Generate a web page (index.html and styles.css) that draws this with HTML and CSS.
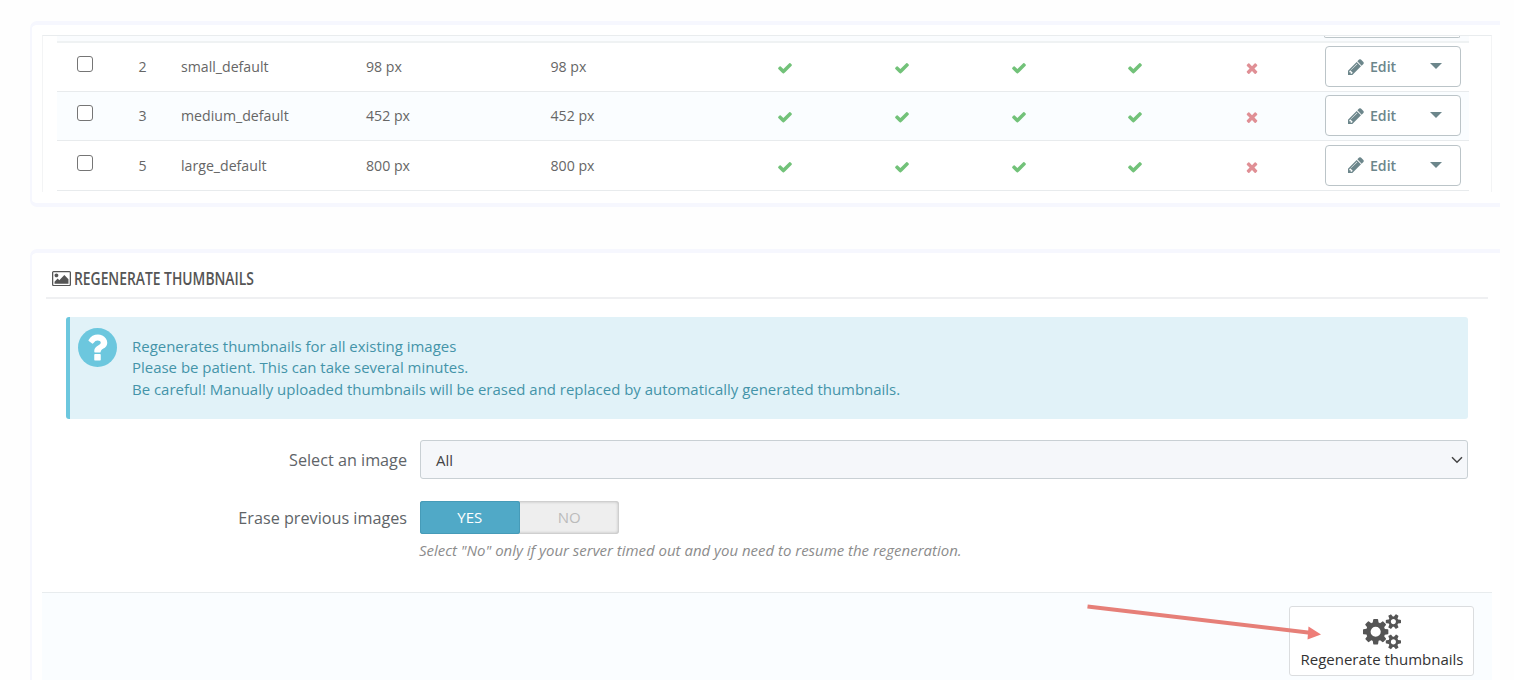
FILE: index.html
```html
<!DOCTYPE html>
<html lang="en">
<head>
<meta charset="utf-8">
<title>Image settings</title>
<link rel="stylesheet" href="styles.css">
</head>
<body>
<svg class="sprite" aria-hidden="true">
  <symbol id="check" viewBox="0 0 1792 1792"><path d="M1671 566q0 40-28 68l-724 724-136 136q-28 28-68 28t-68-28l-136-136-362-362q-28-28-28-68t28-68l136-136q28-28 68-28t68 28l294 295 656-657q28-28 68-28t68 28l136 136q28 28 28 68z"/></symbol>
  <symbol id="times" viewBox="0 0 1792 1792"><path d="M1490 1322q0 40-28 68l-136 136q-28 28-68 28t-68-28l-294-294-294 294q-28 28-68 28t-68-28l-136-136q-28-28-28-68t28-68l294-294-294-294q-28-28-28-68t28-68l136-136q28-28 68-28t68 28l294 294 294-294q28-28 68-28t68 28l136 136q28 28 28 68t-28 68l-294 294 294 294q28 28 28 68z"/></symbol>
  <symbol id="pencil" viewBox="128 128 1536 1536"><path d="M491 1536l91-91-235-235-91 91v107h128v128h107zm523-928q0-22-22-22-10 0-17 7l-542 542q-7 7-7 17 0 22 22 22 10 0 17-7l542-542q7-7 7-17zm-54-192l416 416-832 832h-416v-416zm683 96q0 53-37 90l-166 166-416-416 166-165q36-38 90-38 53 0 91 38l235 234q37 39 37 91z"/></symbol>
</svg>

<main class="page">
  <section class="panel panel-types">
    <div class="table-box">
      <div class="row row-cut"><div class="btn-cut"></div></div>
      <div class="row">
        <span class="check-box"></span><span>2</span><span>small_default</span><span>98 px</span><span>98 px</span>
        <svg class="ok"><use href="#check"/></svg><svg class="ok"><use href="#check"/></svg><svg class="ok"><use href="#check"/></svg><svg class="ok"><use href="#check"/></svg><svg class="no"><use href="#times"/></svg>
        <div class="btn-edit"><svg class="pencil"><use href="#pencil"/></svg><b>Edit</b><i class="caret"></i></div>
      </div>
      <div class="row row-odd">
        <span class="check-box"></span><span>3</span><span>medium_default</span><span>452 px</span><span>452 px</span>
        <svg class="ok"><use href="#check"/></svg><svg class="ok"><use href="#check"/></svg><svg class="ok"><use href="#check"/></svg><svg class="ok"><use href="#check"/></svg><svg class="no"><use href="#times"/></svg>
        <div class="btn-edit"><svg class="pencil"><use href="#pencil"/></svg><b>Edit</b><i class="caret"></i></div>
      </div>
      <div class="row row-last">
        <span class="check-box"></span><span>5</span><span>large_default</span><span>800 px</span><span>800 px</span>
        <svg class="ok"><use href="#check"/></svg><svg class="ok"><use href="#check"/></svg><svg class="ok"><use href="#check"/></svg><svg class="ok"><use href="#check"/></svg><svg class="no"><use href="#times"/></svg>
        <div class="btn-edit"><svg class="pencil"><use href="#pencil"/></svg><b>Edit</b><i class="caret"></i></div>
      </div>
    </div>
  </section>

  <section class="panel panel-regen">
    <h3 class="heading">
      <svg class="picture" viewBox="-64 128 1920 1536"><path d="M576 576q0 80-56 136t-136 56-136-56-56-136 56-136 136-56 136 56 56 136zm1024 384v448h-1408v-192l320-320 160 160 512-512zm96-704h-1600q-13 0-22.5 9.5t-9.5 22.5v1216q0 13 9.5 22.5t22.5 9.5h1600q13 0 22.5-9.5t9.5-22.5v-1216q0-13-9.5-22.5t-22.5-9.5zm160 32v1216q0 66-47 113t-113 47h-1600q-66 0-113-47t-47-113v-1216q0-66 47-113t113-47h1600q66 0 113 47t47 113z"/></svg>
      <span class="heading-text">REGENERATE THUMBNAILS</span>
    </h3>
    <div class="alert">
      <svg class="question" viewBox="128 128 1536 1536"><circle cx="896" cy="896" r="768"/><path d="M1024 1376v-192q0-14-9-23t-23-9h-192q-14 0-23 9t-9 23v192q0 14 9 23t23 9h192q14 0 23-9t9-23zm256-672q0-88-55.500-163t-138.500-116-170-41q-243 0-371 213-15 24 8 42l132 100q7 6 19 6 16 0 25-12 53-68 86-92 34-24 86-24 48 0 85.500 26t37.500 59q0 38-20 61t-68 45q-63 28-115.500 86.500t-52.500 125.500v36q0 14 9 23t23 9h192q14 0 23-9t9-23q0-19 21.500-49.500t54.500-49.500q32-18 49-28.500t46-35 44.500-48 28-60.500 12.500-81z" class="question-mark"/></svg>
      <div class="alert-text">
        <div>Regenerates thumbnails for all existing images</div>
        <div>Please be patient. This can take several minutes.</div>
        <div>Be careful! Manually uploaded thumbnails will be erased and replaced by automatically generated thumbnails.</div>
      </div>
    </div>
    <div class="form-row">
      <label class="label">Select an image</label>
      <div class="select"><span>All</span><svg class="chevron" viewBox="0 0 12 8"><path d="M1 1.200l5 5 5-5"/></svg></div>
    </div>
    <div class="form-row form-row-switch">
      <label class="label">Erase previous images</label>
      <div class="switch"><span class="yes">YES</span><span class="off">NO</span></div>
    </div>
    <p class="help">Select "No" only if your server timed out and you need to resume the regeneration.</p>
    <footer class="footer">
      <div class="btn-regen">
        <svg class="cogs" viewBox="-64 0 1920 1792"><path d="M832 896q0-106-75-181t-181-75-181 75-75 181 75 181 181 75 181-75 75-181zm768 512q0-52-38-90t-90-38-90 38-38 90q0 53 37.500 90.500t90.500 37.500 90.500-37.500 37.500-90.500zm0-1024q0-52-38-90t-90-38-90 38-38 90q0 53 37.500 90.500t90.500 37.500 90.500-37.500 37.500-90.500zm-384 421v185q0 10-7 19.500t-16 10.500l-155 24q-11 35-32 76 34 48 90 115 7 11 7 20 0 12-7 19-23 30-82.500 89.500t-78.500 59.500q-11 0-21-7l-115-90q-37 19-77 31-11 108-23 155-7 24-30 24h-186q-11 0-20-7.500t-10-17.500l-23-153q-34-10-75-31l-118 89q-7 7-20 7-11 0-21-8-144-133-144-160 0-9 7-19 10-14 41-53t47-61q-23-44-35-82l-152-24q-10-1-17-9.500t-7-19.500v-185q0-10 7-19.500t16-10.500l155-24q11-35 32-76-34-48-90-115-7-11-7-20 0-12 7-20 22-30 82-89t79-59q11 0 21 7l115 90q34-18 77-32 11-108 23-154 7-24 30-24h186q11 0 20 7.500t10 17.500l23 153q34 10 75 31l118-89q8-7 20-7 11 0 21 8 144 133 144 160 0 8-7 19-12 16-42 54t-45 60q23 48 34 82l152 23q10 2 17 10.500t7 19.500zm640 533v140q0 16-149 31-12 27-30 52 51 113 51 138 0 4-4 7-122 71-124 71-8 0-46-47t-52-68q-20 2-30 2t-30-2q-14 21-52 68t-46 47q-2 0-124-71-4-3-4-7 0-25 51-138-18-25-30-52-149-15-149-31v-140q0-16 149-31 13-29 30-52-51-113-51-138 0-4 4-7 4-2 35-20t59-34 30-16q8 0 46 46.500t52 67.500q20-2 30-2t30 2q51-71 92-112l6-2q4 0 124 70 4 3 4 7 0 25-51 138 17 23 30 52 149 15 149 31zm0-1024v140q0 16-149 31-12 27-30 52 51 113 51 138 0 4-4 7-122 71-124 71-8 0-46-47t-52-68q-20 2-30 2t-30-2q-14 21-52 68t-46 47q-2 0-124-71-4-3-4-7 0-25 51-138-18-25-30-52-149-15-149-31v-140q0-16 149-31 13-29 30-52-51-113-51-138 0-4 4-7 4-2 35-20t59-34 30-16q8 0 46 46.500t52 67.500q20-2 30-2t30 2q51-71 92-112l6-2q4 0 124 70 4 3 4 7 0 25-51 138 17 23 30 52 149 15 149 31z"/></svg>
        <span>Regenerate thumbnails</span>
      </div>
      <svg class="arrow" viewBox="0 0 240 40"><path d="M3.500 6.500L226 32.800" class="arrow-line"/><path d="M224.500 26.500L237 34.500 223.500 39.500z"/></svg>
    </footer>
  </section>
</main>
</body>
</html>
```

FILE: styles.css
```css
* { box-sizing: border-box; }
body { margin: 0; background: #fefefe; font-family: "Open Sans", "Noto Sans", sans-serif; color: #666; }
svg { display: block; fill: currentColor; }
.sprite { position: absolute; width: 0; height: 0; }
.page { width: 1514px; height: 680px; padding: 21px 14px 0 30px; overflow: hidden; }

.panel { border: solid #f6f7fe; border-width: 4px 0 4px 2px; border-radius: 7px 0 0 7px; background: #fff; }
.panel-types { height: 186px; padding: 10px 8px 0 10px; }
.panel-regen { height: 480px; margin-top: 42px; padding: 0 8px 0 10px; }

.table-box { height: 157px; padding: 0 22px 0 14px; border: 1px solid #f3f4f5; border-top-color: #e9ecee; border-bottom: 0; overflow: hidden; }
.row {
  display: grid;
  grid-template-columns: 81.5px 42.5px 185px 184.5px 176.5px repeat(5, 116.7px) 1fr;
  align-items: center;
  height: 49px;
  padding-bottom: 1px;
  border-bottom: 1px solid #e8ebed;
  font-size: 14.15px;
}
.row-odd { background: #fafdff; }
.row-last { height: 50px; }
.row-cut { display: flex; justify-content: flex-end; align-items: flex-start; height: 7px; border-bottom: 2px solid #eff2f3; background: #fafcfe; padding: 0 9px 0 0; }
.btn-cut { width: 136px; height: 2px; border: 1px solid #bdc6c9; border-top: 0; border-radius: 0 0 4px 4px; background: #fff; }
.check-box { width: 16px; height: 16px; margin: -5px 0 0 20px; border: 1px solid #757575; border-radius: 3px; background: #fff; }
.ok, .no { width: 16px; height: 16px; justify-self: center; margin-top: 3px; }
.ok { color: #72c279; }
.no { color: #e08f95; }
.btn-edit { display: flex; align-items: center; width: 136px; height: 41px; margin-left: 14.5px; padding-left: 22px; border: 1px solid #bbc4c8; border-radius: 4px; background: #fff; color: #6c868b; font-size: 14.15px; }
.btn-edit b { margin-left: 6px; font-weight: 600; }
.pencil { width: 16px; height: 16px; }
.caret { margin: -1px 0 0 33.5px; border: solid transparent; border-width: 6px 6px 0; border-top-color: #6c868b; }

.heading { display: flex; align-items: center; height: 46px; margin: 0 4px; padding: 7px 0 0 6px; border-bottom: 2px solid #eff0f2; color: #555; font-weight: 400; }
.picture { width: 19px; height: 15.2px; }
.heading-text { width: 181px; margin: -1px 0 0 3px; font-family: "Open Sans", sans-serif; font-size: 17.8px; font-weight: 600; white-space: nowrap; transform: scaleX(.779); transform-origin: left; }

.alert { display: flex; height: 102px; margin: 18px 24px 0; padding: 11px 0 0 8px; border-left: 4px solid #6cc7de; border-radius: 3px; background: #e1f2f8; color: #4494a9; }
.question { width: 39px; height: 39px; color: #6cc7de; }
.question-mark { fill: #fff; }
.alert-text { padding: 8px 0 0 15px; font-size: 14.96px; line-height: 21.3px; }

.form-row { display: flex; align-items: center; height: 39px; margin: 21px 24px 0; }
.form-row-switch { height: 33px; margin-top: 22px; }
.label { width: 341px; margin-right: 13px; text-align: right; font-size: 16.2px; color: #606468; }
.select { display: flex; flex: 1; align-items: center; justify-content: space-between; height: 39px; padding: 0 4px 0 15px; border: 1px solid #c9d0d4; border-radius: 3px; background: #f5f7fa; color: #444; font-size: 15px; }
.chevron { width: 12px; height: 8px; fill: none; stroke: #444; stroke-width: 1.5; }
.switch { display: flex; width: 199px; height: 33px; border-radius: 3px; background: #eee; box-shadow: inset 0 0 3px 1px rgba(0, 0, 0, .2); font-size: 15px; line-height: 33px; text-align: center; }
.yes { width: 99.5px; border-radius: 3px; background: #50a9c7; box-shadow: inset 0 0 0 1px #469bb8; color: #fff; }
.off { flex: 1; color: #bbb; }
.help { margin: 5px 0 0 377px; color: #8c8c8c; font-size: 14.97px; font-style: italic; line-height: 22px; }

.footer { position: relative; display: flex; justify-content: flex-end; height: 90px; margin-top: 31px; padding: 13px 18px 0 0; border-top: 1px solid #e8ecee; background: #fafdff; }
.btn-regen { display: flex; flex-direction: column; align-items: center; width: 185px; height: 70px; padding: 7px 0 0 1px; border: 1px solid #dbdddf; border-radius: 3px; background: #fff; color: #333; font-size: 15px; line-height: 18.500px; white-space: nowrap; }
.cogs { width: 38px; height: 35.5px; color: #555; }
.arrow { position: absolute; left: 1042px; top: 7px; width: 240px; height: 40px; color: #ee7d78; }
.arrow-line { fill: none; stroke: #e67f78; stroke-width: 4; }
```
